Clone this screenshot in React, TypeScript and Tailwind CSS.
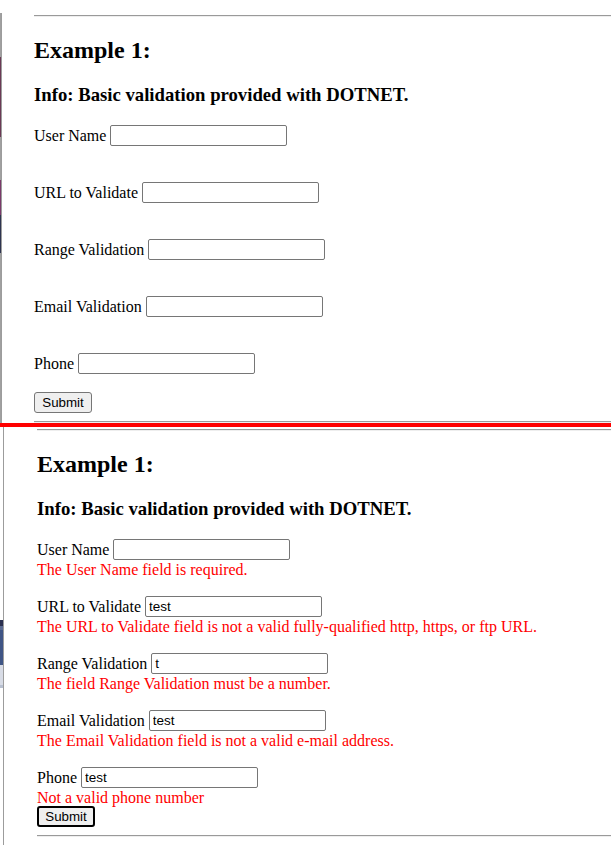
import React from "react";

type Field = { label: string; value: string; error: string };

const fieldsEmpty: Field[] = [
  { label: "User Name", value: "", error: "" },
  { label: "URL to Validate", value: "", error: "" },
  { label: "Range Validation", value: "", error: "" },
  { label: "Email Validation", value: "", error: "" },
  { label: "Phone", value: "", error: "" },
];

const fieldsFilled: Field[] = [
  { label: "User Name", value: "", error: "The User Name field is required." },
  {
    label: "URL to Validate",
    value: "test",
    error: "The URL to Validate field is not a valid fully-qualified http, https, or ftp URL.",
  },
  { label: "Range Validation", value: "t", error: "The field Range Validation must be a number." },
  { label: "Email Validation", value: "test", error: "The Email Validation field is not a valid e-mail address." },
  { label: "Phone", value: "test", error: "Not a valid phone number" },
];

function Hr({ className = "" }: { className?: string }) {
  return <div className={"h-[2px] border-t border-b border-t-[#9a9a9a] border-b-[#eeeeee] " + className} />;
}

function FormContent({ fields, focused, topGap }: { fields: Field[]; focused: boolean; topGap: string }) {
  return (
    <div className="flex flex-col">
      <Hr className={topGap} />
      <h2 className="mt-[19px] text-[24px] leading-[28px] font-bold text-black">Example 1:</h2>
      <h3 className="mt-[20px] text-[18.72px] leading-[22px] font-bold text-black">
        Info: Basic validation provided with DOTNET.
      </h3>
      <div className="mt-[19px] flex flex-col">
        {fields.map((f, i) => (
          <div key={f.label} className={i < fields.length - 1 ? "mb-[18px]" : ""}>
            <div className="flex h-[21px] items-start">
              <span className="whitespace-pre pt-[2px] text-[16px] leading-[18px] text-black">{f.label + " "}</span>
              <input
                readOnly
                value={f.value}
                className="h-[21px] w-[177px] rounded-[2px] border border-[#767676] bg-white px-[3px] text-[13.5px] leading-[19px] text-black outline-none [font-family:'Liberation_Sans',Arial,sans-serif]"
              />
            </div>
            <div className="h-[18px] whitespace-nowrap pt-[1px] text-[16px] leading-[18px] text-[#ff0000]">{f.error}</div>
          </div>
        ))}
      </div>
      <div className="flex">
        <button
          className={
            "flex h-[21px] w-[58px] items-center justify-center rounded-[3px] bg-[#efefef] text-[13.33px] leading-[15px] text-black [font-family:'Liberation_Sans',Arial,sans-serif] " +
            (focused ? "border-2 border-black" : "border border-[#767676]")
          }
        >
          Submit
        </button>
      </div>
      <Hr className="mt-[8px]" />
    </div>
  );
}

export default function App() {
  return (
    <div className="flex h-[845px] w-[611px] flex-col overflow-hidden bg-white [font-family:'Liberation_Serif','Times_New_Roman',serif]">
      {/* top panel */}
      <div className="flex h-[423px] overflow-hidden">
        <div className="flex w-[1px] flex-col">
          <div className="h-[13px]" />
          <div className="h-[44px] bg-[#a0a0a0]" />
          <div className="h-[80px] bg-[#6b3a55]" />
          <div className="h-[43px] bg-[#a0a0a0]" />
          <div className="h-[35px] bg-[#7a3a6a]" />
          <div className="h-[38px] bg-[#2e3550]" />
          <div className="flex-1 bg-[#a0a0a0]" />
        </div>
        <div className="flex w-[1px] flex-col">
          <div className="h-[13px]" />
          <div className="flex-1 bg-[#9c9c9c]" />
        </div>
        <div className="flex-1 pl-[32px]">
          <FormContent fields={fieldsEmpty} focused={false} topGap="mt-[15px]" />
        </div>
      </div>
      {/* red divider */}
      <div className="h-[4px] bg-[#ff0000]" />
      {/* bottom panel */}
      <div className="flex flex-1 overflow-hidden">
        <div className="flex w-[3px] flex-col">
          <div className="h-[193px]" />
          <div className="h-[6px] bg-[#2a3050]" />
          <div className="h-[4px] bg-[#5a6a90]" />
          <div className="h-[35px] bg-[#3f5585]" />
          <div className="h-[20px] bg-[#d8dce6]" />
          <div className="h-[3px] bg-[#b8c0d0]" />
          <div className="flex-1" />
        </div>
        <div className="w-[1px] bg-[#9c9c9c]" />
        <div className="flex-1 pl-[33px]">
          <FormContent fields={fieldsFilled} focused={true} topGap="mt-[2px]" />
        </div>
      </div>
    </div>
  );
}
